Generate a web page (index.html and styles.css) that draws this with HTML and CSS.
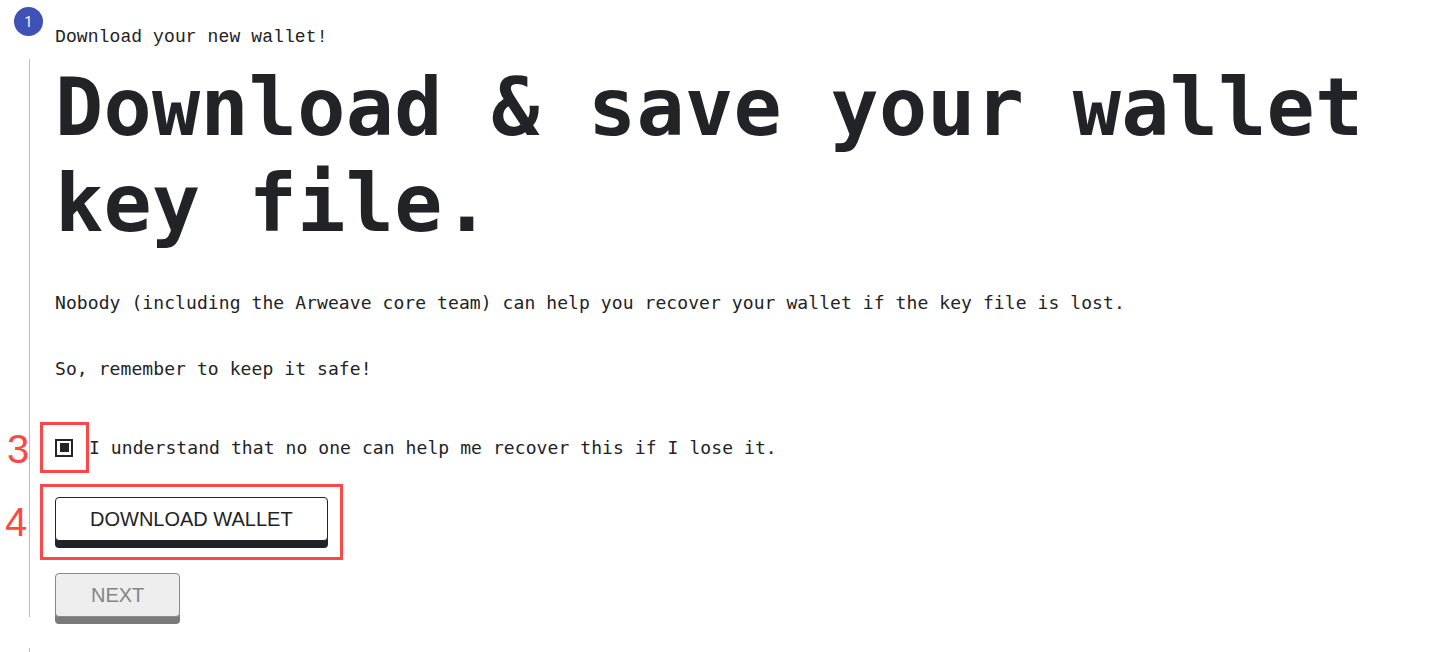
FILE: index.html
```html
<!DOCTYPE html>
<html lang="en">
<head>
<meta charset="utf-8">
<title>Download your new wallet</title>
<link rel="stylesheet" href="styles.css">
</head>
<body>
<div class="stepper">
  <div class="step-head">
    <span class="step-icon">1</span>
    <span class="step-label">Download your new wallet!</span>
  </div>
  <div class="step-content">
    <h1 class="title">Download &amp; save your wallet key file.</h1>
    <p class="text first">Nobody (including the Arweave core team) can help you recover your wallet if the key file is lost.</p>
    <p class="text second">So, remember to keep it safe!</p>
    <label class="check-row">
      <span class="checkbox"><span class="check-mark"></span></span>
      <span class="check-label">I understand that no one can help me recover this if I lose it.</span>
    </label>
    <div class="actions">
      <button class="btn btn-primary" type="button">DOWNLOAD WALLET</button>
      <button class="btn btn-disabled" type="button" disabled>NEXT</button>
    </div>
  </div>
  <div class="step-connector"></div>
</div>

<div class="mark mark-box mark-box-3"></div>
<div class="mark mark-num mark-num-3">3</div>
<div class="mark mark-box mark-box-4"></div>
<div class="mark mark-num mark-num-4">4</div>
</body>
</html>
```

FILE: styles.css
```css
html, body {
  margin: 0;
  padding: 0;
  background: #ffffff;
  height: 652px;
  overflow: hidden;
}

body {
  position: relative;
  color: #222326;
  font-family: "DejaVu Sans Mono", "Liberation Mono", monospace;
}

.stepper {
  display: flex;
  flex-direction: column;
}

.step-head {
  display: flex;
  align-items: flex-start;
  padding-top: 7px;
  padding-left: 14px;
  gap: 12px;
}

.step-icon {
  width: 29px;
  height: 29px;
  border-radius: 50%;
  background: #3f51b5;
  color: #ffffff;
  font-family: "Roboto", "Liberation Sans", sans-serif;
  font-size: 14px;
  display: flex;
  align-items: center;
  justify-content: center;
  flex-shrink: 0;
}

.step-label {
  margin-top: 20px;
  font-family: "Liberation Mono", monospace;
  font-size: 18px;
  line-height: 20px;
  letter-spacing: 0.1px;
  color: #222;
}

.step-content {
  margin-top: 12px;
  margin-left: 29px;
  border-left: 1px solid #bdbdbd;
  padding-left: 25px;
  padding-top: 1px;
  display: flex;
  flex-direction: column;
  align-items: flex-start;
}

.title {
  margin: 0;
  font-family: "DejaVu Sans Mono", monospace;
  font-weight: bold;
  font-size: 80px;
  line-height: 96px;
  letter-spacing: 0.3px;
  color: #222326;
  max-width: 1370px;
}

.text {
  margin: 0;
  font-size: 18px;
  line-height: 27px;
  color: #222326;
  letter-spacing: 0.08px;
}

.text.first {
  margin-top: 37px;
}

.text.second {
  margin-top: 39px;
}

.check-row {
  display: flex;
  align-items: center;
  gap: 16px;
  margin-top: 52px;
}

.checkbox {
  width: 18px;
  height: 18px;
  box-sizing: border-box;
  border: 2.5px solid #222326;
  display: flex;
  align-items: center;
  justify-content: center;
}

.check-mark {
  width: 9px;
  height: 9px;
  background: #222326;
}

.check-label {
  font-size: 18px;
  line-height: 27px;
  letter-spacing: 0.08px;
}

.actions {
  display: flex;
  flex-direction: column;
  align-items: flex-start;
  gap: 32px;
  margin-top: 36px;
}

.btn {
  font-family: "Liberation Sans", Arial, sans-serif;
  font-size: 20px;
  height: 44px;
  padding: 0 34px;
  border-radius: 4px;
  box-sizing: border-box;
  cursor: pointer;
}

.btn-primary {
  background: #ffffff;
  color: #222326;
  border: 1px solid #222326;
  box-shadow: 0 7px 0 #222326;
}

.btn-disabled {
  background: #eeeeee;
  color: #858585;
  border: 1px solid #8a8a8a;
  box-shadow: 0 7px 0 #7a7a7a;
  padding: 0 35px;
}

.step-connector {
  margin-top: 31px;
  margin-left: 29px;
  height: 20px;
  border-left: 1px solid #bdbdbd;
}

/* annotation overlays */
.mark {
  position: absolute;
}

.mark-box {
  border: 3px solid #fd4848;
  box-sizing: border-box;
}

.mark-box-3 {
  left: 40px;
  top: 422px;
  width: 49px;
  height: 51px;
}

.mark-box-4 {
  left: 40px;
  top: 484px;
  width: 303px;
  height: 76px;
}

.mark-num {
  color: #fd4848;
  font-family: "Liberation Sans", Arial, sans-serif;
  font-size: 40px;
  line-height: 40px;
}

.mark-num-3 {
  left: 7px;
  top: 429px;
}

.mark-num-4 {
  left: 5px;
  top: 502px;
}
```
